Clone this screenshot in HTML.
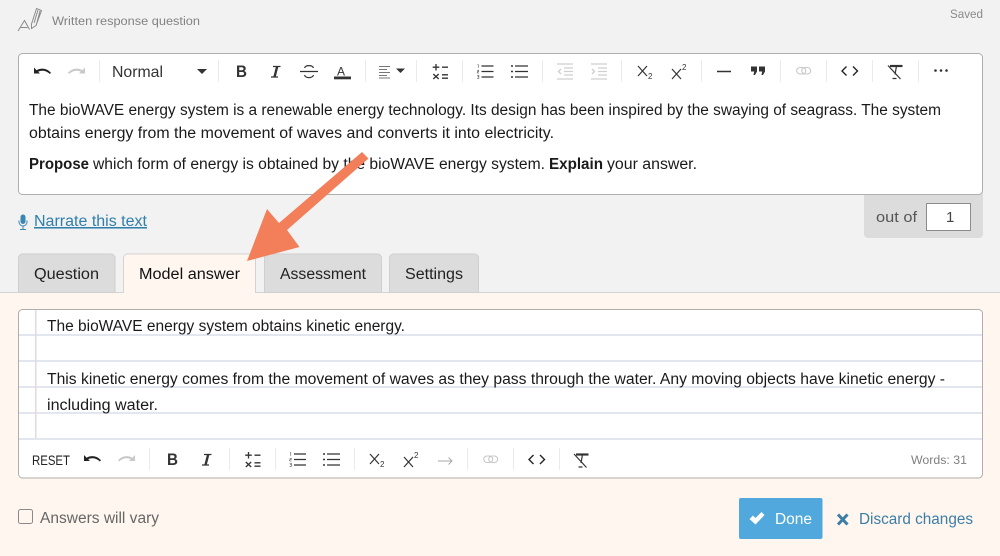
<!DOCTYPE html>
<html><head><meta charset="utf-8"><title>Model answer</title>
<style>
html,body{margin:0;padding:0;width:1000px;height:556px;overflow:hidden;background:#f2f2f2}
svg{display:block}
text{font-family:"Liberation Sans",sans-serif;fill:#222;font-size:15.4px;stroke:none}
.t{font-size:15.4px;fill:#1a1a1a}
</style></head><body>
<svg width="1000" height="556" viewBox="0 0 1000 556" xmlns="http://www.w3.org/2000/svg">
<defs>
<g id="undo"><path d="M1 2V8H7L5.200 6.300C8 4.600 13 4.800 16.800 8.500L18 7.300C14 2.500 8 2 3.600 4.700Z" fill="currentColor"/></g>
<g id="redo"><path d="M18 2V8H12L13.800 6.300C11 4.600 6 4.800 2.200 8.500L1 7.300C5 2.500 11 2 15.400 4.700Z" fill="currentColor"/></g>
<g id="pm" stroke="#333" stroke-width="1.300" fill="none"><path d="M4.500 0V6.500M1.200 3.200H7.800M10.500 3.200H16.500M1.800 10L7.200 15M7.200 10L1.800 15M10.500 10.800H16.500M10.500 14.200H16.500"/></g>
<g id="ol" fill="none" stroke="#333" stroke-width="1.200"><path d="M5 2H17M5 7.500H17M5 13H17"/><path d="M1 .5H1.800V3.800M.5 6.200H2.300V7.600H.7V9H2.500M.6 11.200H2.400V14.500H.6M1 12.800H2.400" stroke-width=".5"/></g>
<g id="ul" fill="none" stroke="#333" stroke-width="1.200"><path d="M4 2H17M4 7.500H17M4 13H17"/><path d="M0 2H2M0 7.500H2M0 13H2" stroke-width="1.600"/></g>
<g id="sub"><path d="M1 1L10 11M10 1L1 11" fill="none" stroke="#333" stroke-width="1.200"/><text x="11" y="14" style="font-size:8px;fill:#333">2</text></g>
<g id="sup"><path d="M1 5L10 15M10 5L1 15" fill="none" stroke="#333" stroke-width="1.200"/><text x="11" y="6" style="font-size:8px;fill:#333">2</text></g>
<g id="link" fill="none" stroke="#c8c8c8" stroke-width="1.100"><rect x=".7" y="1" width="9" height="6.500" rx="3.250"/><rect x="5.700" y="1" width="9" height="6.500" rx="3.250"/></g>
<g id="code" fill="none" stroke="#222" stroke-width="1.400"><path d="M5.500 1.500L1 6L5.500 10.500M12 1.500L16.500 6L12 10.500"/></g>
<g id="clr" fill="none" stroke="#333" stroke-width="1.200"><path d="M3 1.500H15.500" stroke-width="2.200"/><path d="M9.500 1.500L8 10M1 1L13.500 14.500M5.500 14H9.500"/></g>
<g id="B"><text x="0" y="12" textLength="11" lengthAdjust="spacingAndGlyphs" style="font-size:16.500px;font-weight:700;fill:#333">B</text></g>
<g id="I"><path d="M3 1.500H10.500M1 12H8M7 1.500L4.500 12" stroke="#333" stroke-width="1.300" fill="none"/><path d="M7.200 1.500L4.500 12" stroke="#333" stroke-width="2.400" fill="none"/></g>
</defs>

<!-- page bands -->
<rect x="0" y="292" width="1000" height="1" fill="#d3d3d3"/>
<rect x="0" y="293" width="1000" height="263" fill="#fef6ef"/>

<!-- header -->
<g fill="none" stroke="#8b8b8b" stroke-width="1">
<path d="M18 31L24.500 20.500L29.500 29.500M20.500 27.500H27.500"/>
<path d="M31.500 24L36.500 8.500L41.500 10.500L36 25.500L31.500 28.500ZM34 23L38 10M36.500 24L40 11" stroke-width="1"/>
</g>
<text x="52" y="25" textLength="148" lengthAdjust="spacingAndGlyphs" style="font-size:12.400px;fill:#828282">Written response question</text>
<text x="950" y="18" textLength="33" lengthAdjust="spacingAndGlyphs" style="font-size:12.400px;fill:#8a8a8a">Saved</text>

<!-- out of panel -->
<path d="M864 190H983V234a4 4 0 0 1-4 4H868a4 4 0 0 1-4-4Z" fill="#dcdcdc"/>
<text x="876" y="222" textLength="41" lengthAdjust="spacingAndGlyphs" style="font-size:15px;fill:#555">out of</text>
<rect x="926.500" y="203.500" width="44" height="27" fill="#fff" stroke="#8c8c8c"/>
<text x="946" y="222" style="font-size:15px;fill:#444">1</text>

<!-- top editor -->
<rect x="18.500" y="53.500" width="964" height="141" rx="4" fill="#fff" stroke="#aeaeae"/>
<g stroke="#ebebeb" stroke-width="1">
<path d="M99.500 60V82M218.500 60V82M365.500 60V82M416.500 60V82M462.500 60V82M542.500 60V82M621.500 60V82M701.500 60V82M780.500 60V82M826.500 60V82M872.500 60V82M918.500 60V82"/>
</g>
<use href="#undo" x="33" y="65.500" color="#222"/>
<use href="#redo" x="67" y="65.500" color="#c8c8c8"/>
<text x="112" y="77" textLength="51" lengthAdjust="spacingAndGlyphs" style="font-size:16px;fill:#333">Normal</text>
<path d="M197 69H207L202 74Z" fill="#333"/>
<use href="#B" x="236" y="65"/>
<use href="#I" x="270" y="65"/>
<g fill="none" stroke="#333" stroke-width="1.200"><path d="M300 71.500H318M304.500 68C305.500 64.800 312.500 64.800 313.500 68M304.500 75C305.500 78.500 312.500 78.500 313.500 75"/></g>
<text x="337" y="75.500" style="font-size:12px;fill:#333">A</text><rect x="334" y="76.500" width="17" height="2.800" fill="#333"/>
<path d="M379 66.500H390M379 69.500H387M379 72.500H390M379 75.500H387M379 78H390" stroke="#777" stroke-width="1" fill="none"/>
<path d="M396 68.500H405L400.500 73Z" fill="#333"/>
<use href="#pm" x="431.500" y="64"/>
<use href="#ol" x="476.500" y="64"/>
<use href="#ul" x="511" y="64"/>
<g fill="none" stroke="#cfcfcf" stroke-width="1.200">
<path d="M557 64H573M564 68H573M564 71.500H573M564 75H573M557 79H573"/>
<path d="M591 64H607M598 68H607M598 71.500H607M598 75H607M591 79H607"/>
<path d="M561 69L558.500 71.500L561 74M592 69L594.500 71.500L592 74" stroke-width="1.400"/>
</g>
<use href="#sub" x="637" y="65"/>
<use href="#sup" x="671" y="64"/>
<path d="M717 71.500H731" stroke="#333" stroke-width="1.500"/>
<path d="M751 66.500H757V71.500L755 75H753.500L754.200 71.500H751ZM759 66.500H765V71.500L763 75H761.500L762.200 71.500H759Z" fill="#333"/>
<use href="#link" x="796" y="66.500"/>
<use href="#code" x="841" y="65"/>
<use href="#clr" x="887" y="64.500"/>
<g fill="#333"><circle cx="935.500" cy="70.500" r="1.300"/><circle cx="941" cy="70.500" r="1.300"/><circle cx="946.500" cy="70.500" r="1.300"/></g>

<!-- top text -->
<text class="t" x="29" y="115" textLength="912" lengthAdjust="spacingAndGlyphs">The bioWAVE energy system is a renewable energy technology. Its design has been inspired by the swaying of seagrass. The system</text>
<text class="t" x="29" y="138" textLength="525" lengthAdjust="spacingAndGlyphs">obtains energy from the movement of waves and converts it into electricity.</text>
<text class="t" x="29" y="169" textLength="60" lengthAdjust="spacingAndGlyphs" style="font-weight:700">Propose</text>
<text class="t" x="93" y="169" textLength="452" lengthAdjust="spacingAndGlyphs">which form of energy is obtained by the bioWAVE energy system.</text>
<text class="t" x="549" y="169" textLength="54" lengthAdjust="spacingAndGlyphs" style="font-weight:700">Explain</text>
<text class="t" x="607" y="169" textLength="90" lengthAdjust="spacingAndGlyphs">your answer.</text>

<!-- narrate -->
<g fill="#3a86b4"><rect x="20.500" y="214.500" width="5" height="9.500" rx="2.500"/><path d="M19 220.500V222a4 4 0 0 0 8 0V220.500" fill="none" stroke="#3a86b4" stroke-width="1"/><path d="M23 226V229M20 229.500H26" stroke="#3a86b4" stroke-width="1"/></g>
<text x="34" y="226" textLength="113" lengthAdjust="spacingAndGlyphs" style="fill:#2f7eab;text-decoration:underline">Narrate this text</text>

<!-- tabs -->
<path d="M18.500 292.500V258a4 4 0 0 1 4-4H111a4 4 0 0 1 4 4V292.500Z" fill="#dcdcdc" stroke="#cfcfcf"/>
<path d="M123.500 293V258a4 4 0 0 1 4-4H251.500a4 4 0 0 1 4 4V293" fill="#fef6ef" stroke="#d3d3d3"/>
<path d="M264.500 292.500V258a4 4 0 0 1 4-4H377.500a4 4 0 0 1 4 4V292.500Z" fill="#dcdcdc" stroke="#cfcfcf"/>
<path d="M389.500 292.500V258a4 4 0 0 1 4-4H474.500a4 4 0 0 1 4 4V292.500Z" fill="#dcdcdc" stroke="#cfcfcf"/>
<rect x="124" y="292" width="131" height="2" fill="#fef6ef"/>
<text x="34" y="279" textLength="65" lengthAdjust="spacingAndGlyphs" style="fill:#222">Question</text>
<text x="139" y="279" textLength="101" lengthAdjust="spacingAndGlyphs" style="fill:#111">Model answer</text>
<text x="280" y="279" textLength="86" lengthAdjust="spacingAndGlyphs" style="fill:#222">Assessment</text>
<text x="405" y="279" textLength="58" lengthAdjust="spacingAndGlyphs" style="fill:#222">Settings</text>

<!-- lower editor -->
<rect x="18.500" y="309.500" width="964" height="168.500" rx="4" fill="#fff" stroke="#aeaeae"/>
<g fill="#e2e6ef">
<rect x="19" y="334" width="963" height="2"/><rect x="19" y="360" width="963" height="2"/><rect x="19" y="386" width="963" height="2"/><rect x="19" y="412" width="963" height="2"/><rect x="19" y="438" width="963" height="2"/>
</g>
<rect x="35" y="310" width="1.500" height="128" fill="#e3d9de"/>
<text class="t" x="47" y="331" textLength="358" lengthAdjust="spacingAndGlyphs">The bioWAVE energy system obtains kinetic energy.</text>
<text class="t" x="47" y="384" textLength="898" lengthAdjust="spacingAndGlyphs">This kinetic energy comes from the movement of waves as they pass through the water. Any moving objects have kinetic energy -</text>
<text class="t" x="47" y="410" textLength="111" lengthAdjust="spacingAndGlyphs">including water.</text>

<!-- lower toolbar -->
<g stroke="#ebebeb" stroke-width="1">
<path d="M149.500 448V470M229.500 448V470M275.500 448V470M354.500 448V470M467.500 448V470M513.500 448V470M559.500 448V470"/>
</g>
<text x="32" y="465" textLength="38" lengthAdjust="spacingAndGlyphs" style="font-size:13.500px;fill:#222">RESET</text>
<use href="#undo" x="83" y="453" color="#222"/>
<use href="#redo" x="117" y="453" color="#c8c8c8"/>
<use href="#B" x="167" y="453"/>
<use href="#I" x="201" y="453"/>
<use href="#pm" x="244" y="452"/>
<use href="#ol" x="289" y="452"/>
<use href="#ul" x="323" y="452"/>
<use href="#sub" x="369" y="453"/>
<use href="#sup" x="403" y="452"/>
<path d="M438 461H452M448.500 457.500L452 461L448.500 464.500" fill="none" stroke="#aaa" stroke-width="1"/>
<use href="#link" x="483" y="455"/>
<use href="#code" x="528" y="453.500"/>
<use href="#clr" x="573" y="453"/>
<text x="911" y="464" textLength="56" lengthAdjust="spacingAndGlyphs" style="font-size:12.400px;fill:#808080">Words: 31</text>

<!-- bottom -->
<rect x="18.500" y="509.500" width="14" height="14" rx="2" fill="none" stroke="#8a8a8a"/>
<text x="40" y="523" textLength="119" lengthAdjust="spacingAndGlyphs" style="fill:#666">Answers will vary</text>
<rect x="739" y="498" width="83.500" height="41" rx="2" fill="#50a8dc"/>
<path d="M749.500 519L753 515.500L755.500 518L761.500 512L764.500 515L755.500 524.500Z" fill="#fff"/>
<text x="775" y="524" textLength="37" lengthAdjust="spacingAndGlyphs" style="fill:#fff">Done</text>
<path d="M838 514.500L847.500 524.500M847.500 514.500L838 524.500" stroke="#3d7da6" stroke-width="3" fill="none"/>
<text x="859" y="524" textLength="114" lengthAdjust="spacingAndGlyphs" style="fill:#3d7da6">Discard changes</text>

<!-- arrow -->
<path d="M362 152L368.500 158.500L287 230L299.500 247L247 261L267 209L279 223Z" fill="#f27f59"/>
</svg>
</body></html>
